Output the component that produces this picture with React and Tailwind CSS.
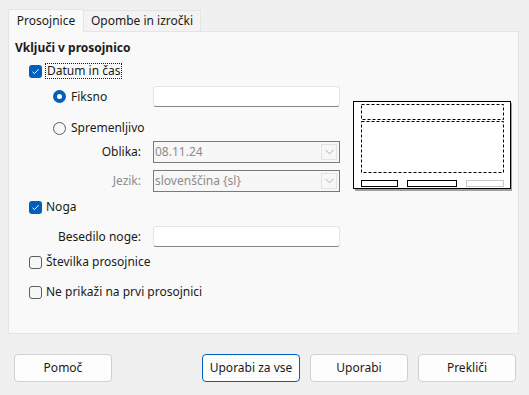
import React from "react"

const font = { fontFamily: '"Noto Sans", "Open Sans", sans-serif' }

function CheckBox({ checked }) {
  if (checked) {
    return (
      <span className="w-[13px] h-[13px] rounded-[3px] bg-[#005fb8] flex items-center justify-center shrink-0">
        <svg width="9" height="9" viewBox="0 0 9 9">
          <path d="M1.5 4.8 L3.5 6.6 L7.5 2.2" fill="none" stroke="#fff" strokeWidth="1" />
        </svg>
      </span>
    )
  }
  return <span className="w-[13px] h-[13px] rounded-[3px] border border-[#5d5d5d] bg-[#f7f7f7] shrink-0" />
}

function Radio({ checked }) {
  if (checked) {
    return (
      <span className="w-[13px] h-[13px] rounded-full bg-[#005fb8] flex items-center justify-center shrink-0">
        <span className="w-[5px] h-[5px] rounded-full bg-white" />
      </span>
    )
  }
  return <span className="w-[13px] h-[13px] rounded-full border border-[#5d5d5d] bg-[#f7f7f7] shrink-0" />
}

function TextInput() {
  return (
    <div className="w-[187px] h-[21px] bg-white border border-[#e5e5e5] border-b-[#868686] rounded-[3px]" />
  )
}

function Combo({ value }) {
  return (
    <div className="w-[187px] h-[22px] border border-[#7a7a7a] bg-[#f7f7f7] flex items-center pl-[1px] pr-[2px]">
      <span className="flex-1 text-[#8c8c8c]">{value}</span>
      <span className="w-[16px] h-[16px] border border-[#e3e3e3] flex items-center justify-center">
        <svg width="9" height="6" viewBox="0 0 9 6">
          <path d="M0.5 0.8 L4.5 4.8 L8.5 0.8" fill="none" stroke="#b0b0b0" strokeWidth="1" />
        </svg>
      </span>
    </div>
  )
}

function Preview() {
  return (
    <svg width="160" height="91" viewBox="0 0 160 91">
      <rect x="2" y="2" width="157" height="88" fill="#a0a0a0" />
      <rect x="0.5" y="0.5" width="157" height="87" fill="#fff" stroke="#000" strokeWidth="1" />
      <rect x="8.5" y="3.5" width="142" height="15" fill="none" stroke="#000" strokeWidth="1" strokeDasharray="3 2" />
      <rect x="8.5" y="20.5" width="142" height="51" fill="none" stroke="#000" strokeWidth="1" strokeDasharray="3 2" />
      <rect x="8.5" y="79.5" width="36" height="6" fill="none" stroke="#000" strokeWidth="1" />
      <rect x="54.5" y="79.5" width="49" height="6" fill="none" stroke="#000" strokeWidth="1" />
      <rect x="113.5" y="79.5" width="37" height="6" fill="none" stroke="#c8c8c8" strokeWidth="1" />
    </svg>
  )
}

function Button({ children, primary }) {
  return (
    <button
      className={
        primary
          ? "w-[98px] h-[28px] rounded-[4px] bg-[#fdfdfd] border border-[#005fb8] text-[12px] text-[#1a1a1a]"
          : "w-[98px] h-[28px] rounded-[4px] bg-[#fdfdfd] border border-[#d0d0d0] text-[12px] text-[#1a1a1a]"
      }
    >
      {children}
    </button>
  )
}

export default function App() {
  return (
    <div className="w-[529px] h-[395px] bg-[#f0f0f0] text-[12px] text-[#1a1a1a] overflow-hidden" style={font}>
      <div className="flex items-end pl-[8px] pt-[8px] h-[31px]">
        <div className="w-[76px] h-[23px] bg-[#f9f9f9] border border-[#e5e5e5] border-b-0 flex items-center justify-center relative z-10 -mb-px rounded-t-[2px]">
          Prosojnice
        </div>
        <div className="w-[117px] h-[21px] bg-[#f3f3f3] border border-[#e5e5e5] border-b-0 border-l-0 flex items-center justify-center">
          Opombe in izročki
        </div>
      </div>
      <div className="mx-[8px] w-[511px] h-[303px] bg-[#f9f9f9] border border-[#e5e5e5] flex">
        <div className="w-[331px] pl-[6px] pt-[7px] flex flex-col">
          <div className="h-[18px] flex items-center font-bold">Vključi v prosojnico</div>
          <div className="h-[20px] mt-[4px] pl-[14px] flex items-center gap-[3px]">
            <CheckBox checked />
            <span className="border border-dotted border-[#1a1a1a] px-[1px] leading-[14px]">Datum in čas</span>
          </div>
          <div className="h-[21px] mt-[5px] pl-[38px] flex items-center">
            <Radio checked />
            <span className="ml-[5px] flex-1">Fiksno</span>
            <TextInput />
          </div>
          <div className="h-[20px] mt-[11px] pl-[38px] flex items-center">
            <Radio />
            <span className="ml-[5px]">Spremenljivo</span>
          </div>
          <div className="h-[22px] mt-[3px] flex items-center">
            <span className="w-[127px] text-right pr-[1px]">Oblika:</span>
            <span className="w-[11px]" />
            <Combo value="08.11.24" />
          </div>
          <div className="h-[22px] mt-[7px] flex items-center">
            <span className="w-[127px] text-right pr-[1px] text-[#8c8c8c]">Jezik:</span>
            <span className="w-[11px]" />
            <Combo value="slovenščina {sl}" />
          </div>
          <div className="h-[20px] mt-[5px] pl-[14px] flex items-center gap-[4px]">
            <CheckBox checked />
            <span>Noga</span>
          </div>
          <div className="h-[21px] mt-[9px] flex items-center">
            <span className="w-[127px] text-right pr-[1px]">Besedilo noge:</span>
            <span className="w-[11px]" />
            <TextInput />
          </div>
          <div className="h-[20px] mt-[5px] pl-[14px] flex items-center gap-[4px]">
            <CheckBox />
            <span>Številka prosojnice</span>
          </div>
          <div className="h-[20px] mt-[10px] pl-[14px] flex items-center gap-[4px]">
            <CheckBox />
            <span>Ne prikaži na prvi prosojnici</span>
          </div>
        </div>
        <div className="pl-[13px] pt-[69px]">
          <Preview />
        </div>
      </div>
      <div className="flex items-center pl-[14px] pt-[20px] gap-[10px]">
        <Button>Pomoč</Button>
        <span className="w-[70px]" />
        <Button primary>Uporabi za vse</Button>
        <Button>Uporabi</Button>
        <Button>Prekliči</Button>
      </div>
    </div>
  )
}
